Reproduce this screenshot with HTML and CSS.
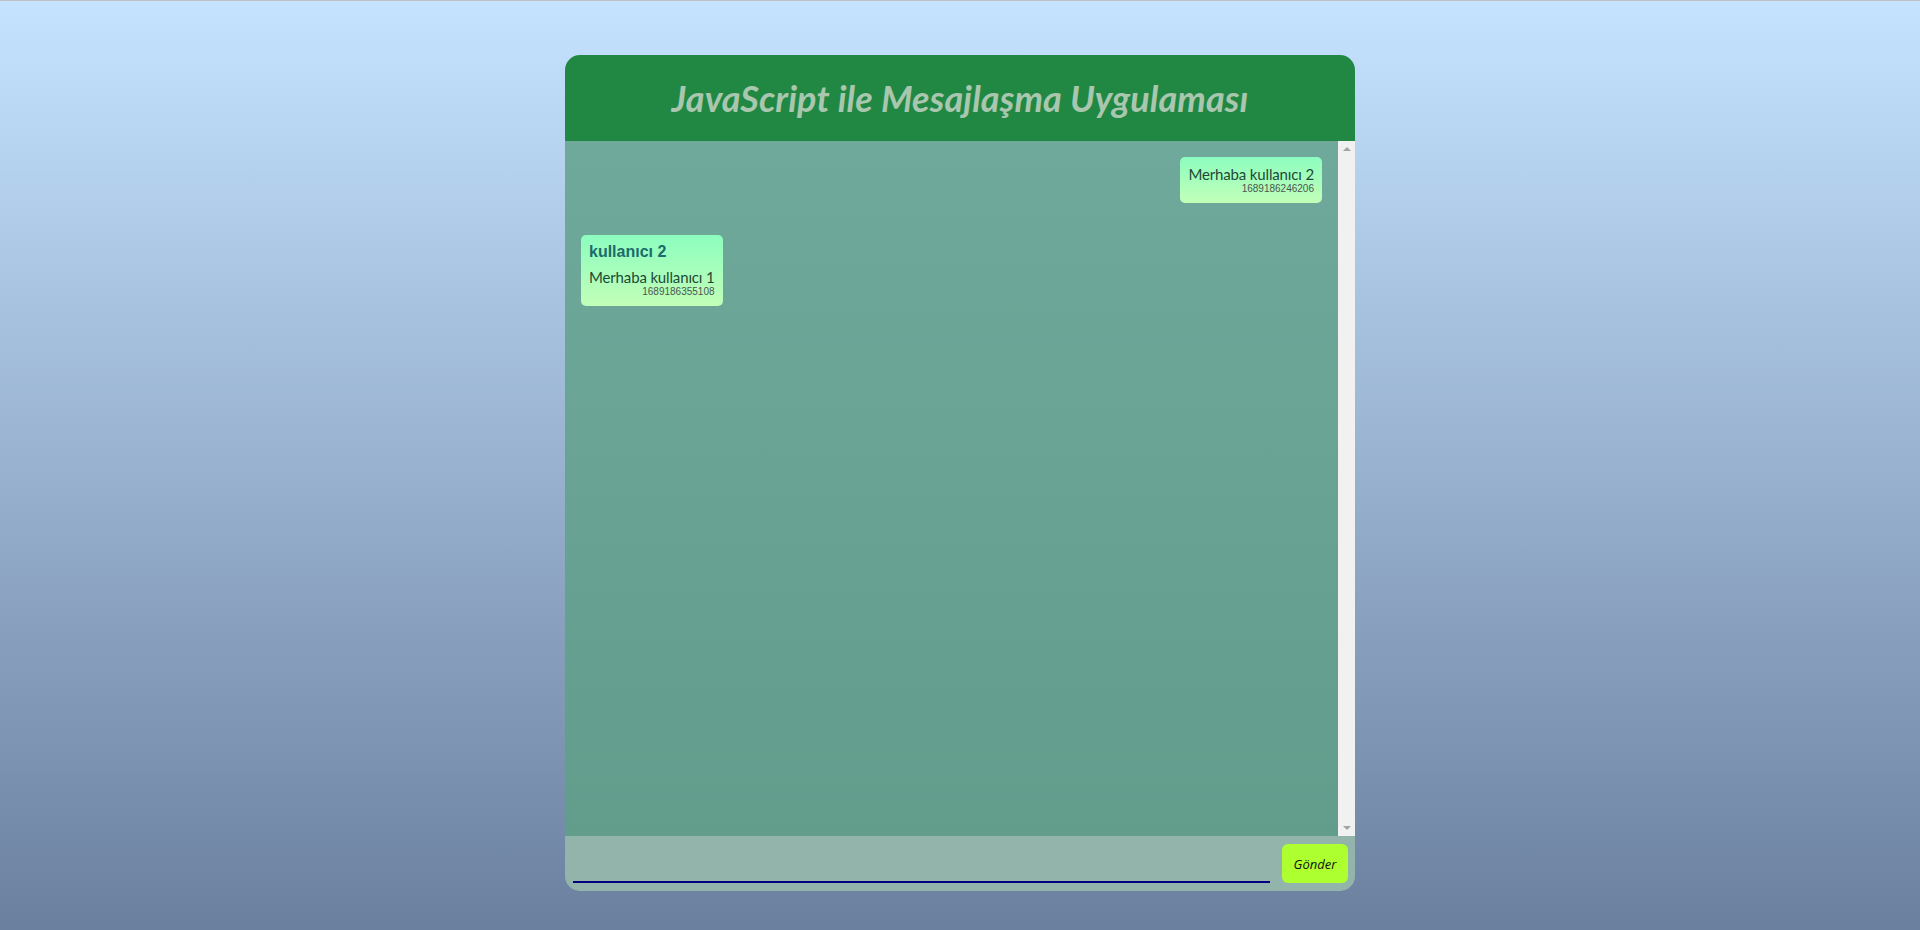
FILE: index.html
```html
<!DOCTYPE html>
<html lang="tr">
<head>
<meta charset="utf-8">
<title>JavaScript ile Mesajlaşma Uygulaması</title>
<link rel="stylesheet" href="styles.css">
</head>
<body>
  <div class="app">
    <header class="header">
      <h1 class="title">JavaScript ile Mesajlaşma Uygulaması</h1>
    </header>
    <div class="chat">
      <div class="messages">
        <div class="msg self">
          <div class="msg-text">Merhaba kullanıcı 2</div>
          <div class="msg-time">1689186246206</div>
        </div>
        <div class="msg other">
          <div class="msg-name">kullanıcı 2</div>
          <div class="msg-text">Merhaba kullanıcı 1</div>
          <div class="msg-time">1689186355108</div>
        </div>
      </div>
      <div class="scrollbar">
        <span class="arrow up"></span>
        <span class="arrow down"></span>
      </div>
    </div>
    <div class="footer">
      <input class="input" type="text">
      <button class="send">Gönder</button>
    </div>
  </div>
</body>
</html>
```
FILE: styles.css
```css
html, body {
  margin: 0;
  padding: 0;
}
body {
  min-height: 930px;
  border-top: 1px solid #c0c0c0;
  box-sizing: border-box;
  background: linear-gradient(to bottom, #c5e3ff 0%, #6b809f 100%);
  font-family: Lato, "Open Sans", sans-serif;
  overflow: hidden;
}
.app {
  width: 790px;
  margin: 54px auto 0;
  border-radius: 15px;
  overflow: hidden;
}
.header {
  height: 86px;
  background: #218844;
  display: flex;
  align-items: center;
  justify-content: center;
}
.title {
  margin: 0;
  font-family: Lato, sans-serif;
  font-style: italic;
  font-weight: 700;
  font-size: 36px;
  color: #a9c6ae;
  letter-spacing: 0.1px;
}
.chat {
  height: 695px;
  display: flex;
  background: linear-gradient(to bottom, #6fa99b, #629c8b);
}
.messages {
  flex: 1;
  display: flex;
  flex-direction: column;
  gap: 32px;
  padding: 16px;
}
.msg {
  padding: 8px;
  border-radius: 5px;
  background: linear-gradient(to bottom, #8cfdbf, #c2ffb8);
}
.msg.self {
  align-self: flex-end;
}
.msg.other {
  align-self: flex-start;
}
.msg-name {
  font-family: "Liberation Sans", Arial, sans-serif;
  font-weight: 700;
  font-size: 16px;
  line-height: 18px;
  color: #1b6b6c;
  margin-bottom: 7px;
}
.msg-text {
  font-family: Lato, sans-serif;
  font-size: 15px;
  line-height: 18px;
  letter-spacing: -0.15px;
  color: #1c4a37;
}
.msg-time {
  font-family: "Liberation Sans", Arial, sans-serif;
  font-size: 10px;
  line-height: 12px;
  color: #4a5550;
  text-align: right;
}
.scrollbar {
  width: 17px;
  background: #f1f1f1;
  display: flex;
  flex-direction: column;
  justify-content: space-between;
  align-items: center;
  padding: 6px 0;
}
.arrow {
  width: 0;
  height: 0;
  border-left: 4px solid transparent;
  border-right: 4px solid transparent;
}
.arrow.up {
  border-bottom: 4px solid #a3a3a3;
}
.arrow.down {
  border-top: 4px solid #a3a3a3;
}
.footer {
  display: flex;
  align-items: stretch;
  padding: 8px 7px 8px 8px;
  background: #93b4aa;
}
.input {
  flex: 1;
  height: 39px;
  box-sizing: border-box;
  border: none;
  border-bottom: 2px solid #000080;
  background: transparent;
  outline: none;
  padding: 0 4px;
  font-family: Lato, sans-serif;
  font-size: 15px;
}
.send {
  width: 66px;
  height: 39px;
  margin-left: 12px;
  border: none;
  border-radius: 6px;
  background: #adff2f;
  font-family: "Open Sans", sans-serif;
  font-style: italic;
  font-size: 13px;
  color: #111;
  padding: 0;
}
```
